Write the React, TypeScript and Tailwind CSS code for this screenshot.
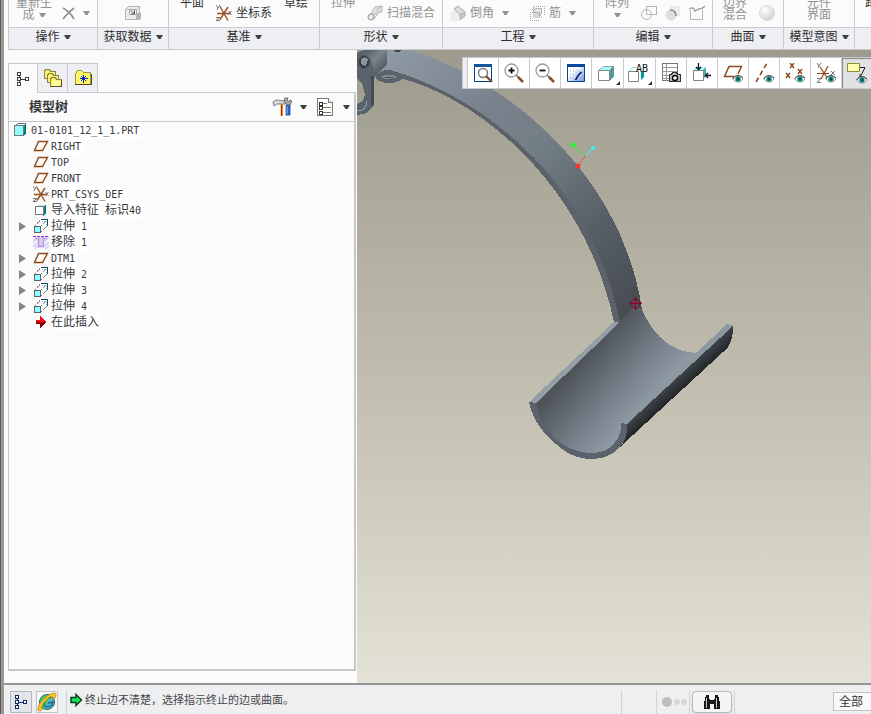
import React from 'react';
import clsx from 'clsx';

type IconProps = { children: React.ReactNode; size?: 16 | 20; smooth?: boolean };

const Icon: React.FC<IconProps> = ({ children, size = 16, smooth }) => (
  <svg
    viewBox={size === 20 ? '0 0 20 20' : '0 0 16 16'}
    className={clsx('shrink-0', size === 20 ? 'w-5 h-5' : 'w-4 h-4')}
    fill="none"
    shapeRendering={smooth ? 'auto' : 'crispEdges'}
    aria-hidden="true"
  >
    {children}
  </svg>
);

const Caret: React.FC<{ muted?: boolean }> = ({ muted }) => (
  <svg viewBox="0 0 7 4" className={clsx('shrink-0 w-[7px] h-1', muted ? 'text-[#929294]' : 'text-[#404044]')} aria-hidden="true">
    <path d="M0 0h7L4.5 4h-2z" fill="currentColor" />
  </svg>
);

/* ---------- ribbon icons ---------- */

const CrossIcon = () => (
  <Icon smooth>
    <path d="M2 3c4 2 8 6 11 11M13 3C9 6 5 10 2 14" stroke="#929292" strokeWidth="1.8" />
  </Icon>
);

const ImportIcon = () => (
  <svg viewBox="0 0 18 16" className="w-[18px] h-4" fill="none" aria-hidden="true">
    <path d="M1.500 4.500l3-3h11v10l-3 3h-11z" fill="#ececec" stroke="#b4b4b4" />
    <path d="M1.500 4.500h11v10M12.500 4.500l3-3" stroke="#c2c2c2" />
    <path d="M12 8h5v6l-2 1h-3z" fill="#b3b3b3" />
    <path d="M5.500 4.500h7v5h-7z" fill="#f8f8f8" stroke="#ababab" />
    <path d="M6.500 5.500l4 3M10.500 5v4H7" stroke="#555" />
  </svg>
);

const CsysIcon = () => (
  <Icon smooth>
    <path d="M1 8.500h13M4 1.500l8 14M12 2L4 14.500" stroke="#9a4f1c" strokeWidth="1.4" />
    <path d="M0 0l2 3 2-3M2 3l-1 2M0 12.500h4l-4 3h4M12.500 6l3 4M15.500 6l-3 4" stroke="#77777c" />
  </Icon>
);

const SweepIcon = () => (
  <Icon smooth>
    <path d="M1 11C5 9 5 6 8 2l7-1v6c-4 0-5 3-8 7z" fill="#e2e2e2" stroke="#b4b4b4" />
    <circle cx="4" cy="12" r="3" fill="#e9e9e9" stroke="#999" />
    <path d="M9 5l6-4M6 10l7-4" stroke="#b8b8b8" />
  </Icon>
);

const ChamferIcon = () => (
  <Icon smooth>
    <path d="M0 7l5-1 4 4v6H0z" fill="#eeeeee" />
    <path d="M10 9l5-2v4l-5 4z" fill="#c9c9c9" />
    <path d="M4 4l4-3 7 6-5 3z" fill="#dcdcdc" stroke="#a8a8a8" />
    <path d="M10 10v5l5-4V7" stroke="#b0b0b0" />
  </Icon>
);

const RibIcon = () => (
  <Icon>
    <path d="M1 7v8h9l5-5V1H6z" stroke="#a5a5a5" strokeDasharray="1 1" />
    <path d="M4 7h7v6H4z" fill="#d5d5d5" />
    <path d="M4 7l3-4h5v6l-2 3V7z" fill="#e7e7e7" stroke="#b2b2b2" />
  </Icon>
);

const MergeIcon = () => (
  <Icon smooth>
    <rect x="5.500" y="1.500" width="10" height="8" stroke="#b5b5b5" />
    <circle cx="5.500" cy="9.500" r="5" fill="#fbfbfb" stroke="#b5b5b5" />
    <path d="M5.500 5v4.500h5" stroke="#b5b5b5" />
  </Icon>
);

const IntersectIcon = () => (
  <Icon smooth>
    <rect x="5" y="1" width="10" height="10" fill="#ececec" />
    <circle cx="6" cy="10" r="5.500" fill="#dedede" />
    <path d="M5 5c4 0 6 2 6 6" stroke="#888" strokeWidth="1.500" />
  </Icon>
);

const TrimIcon = () => (
  <Icon smooth>
    <path d="M1.500 5v9.500h12V5" stroke="#b5b5b5" />
    <path d="M0 4c3-2 5-1 6 2l4-2c3 0 4-1 6-3" stroke="#999" strokeWidth="1.300" />
  </Icon>
);

const SphereIcon = () => (
  <Icon smooth>
    <defs>
      <radialGradient id="sphere" cx="35%" cy="30%" r="75%">
        <stop offset="0" stopColor="#ffffff" />
        <stop offset="1" stopColor="#d0d0d0" />
      </radialGradient>
    </defs>
    <circle cx="8" cy="8" r="7.500" fill="url(#sphere)" stroke="#dcdcdc" />
  </Icon>
);

/* ---------- tree icons ---------- */

const PartIcon = () => (
  <Icon>
    <path d="M10 4l3-3v10l-3 3z" fill="#008c92" />
    <path d="M1 4l3-3h9l-3 3z" fill="#e4ffff" />
    <path d="M1.500 4.500l3-3h8" stroke="#777" />
    <rect x="1.500" y="3.500" width="9" height="10" fill="#90ffff" stroke="#777" />
    <path d="M12.500 2v9l-2 2" stroke="#006b72" />
  </Icon>
);

const DatumPlaneIcon = () => (
  <Icon smooth>
    <path d="M1.500 12.500L5.500 3.500h9l-5 9z" stroke="#8f4818" strokeWidth="1.400" />
  </Icon>
);

const ImportFeatureIcon = () => (
  <Icon>
    <path d="M10 5l3-2v8l-3 3z" fill="#168c93" />
    <path d="M3 5l3-2h7l-3 2z" fill="#a8f6f8" />
    <path d="M12.500 3v8" stroke="#006f79" />
    <rect x="2.500" y="4.500" width="8" height="8" fill="#fff" stroke="#777" />
  </Icon>
);

const ExtrudeIcon = () => (
  <Icon>
    <path d="M2 8l6-7M8 14l7-7M8 8l5-5" stroke="#888" strokeDasharray="2 1" />
    <path d="M8 1.500h6.500v6" stroke="#164f53" />
    <path d="M9 3.500h4v4" stroke="#8cd8d8" strokeDasharray="1 1" />
    <rect x="1.500" y="8.500" width="6" height="6" fill="#91ffff" stroke="#606060" />
  </Icon>
);

const RemoveIcon = () => (
  <Icon smooth>
    <path d="M0 2h16v12H0z" fill="#f1f1ff" />
    <path d="M0 8l4-4M0 13l4-4M2 15l3-3M12 7l4-4M12 12l4-4M12 15l4-3" stroke="#ccd0f7" strokeWidth="1.500" />
    <path d="M5 3h6v9H5z" fill="#d3d3d3" />
    <path d="M2 4.500h3.500v8h5v-8H14" stroke="#ca90ee" strokeWidth="1.500" />
    <path d="M0 2.500h16" stroke="#8c2ec8" strokeDasharray="3 1" />
  </Icon>
);

const InsertHereIcon = () => (
  <Icon>
    <path d="M3 6h4V2l6 6-6 6v-4H3z" fill="#ef1010" />
    <path d="M3 8h10l-6 6v-4H3z" fill="#8e0000" />
  </Icon>
);

const ModelTreeIcon = ({ color = '#3d3d40' }) => (
  <Icon>
    <path d="M4 5v6M6 8.500h4" stroke={color} />
    <path d="M2.500 1.500h3v3h-3zM2.500 6.500h3v3h-3zM2.500 11.500h3v3h-3zM10.500 6.500h3v3h-3z" fill="#fff" stroke={color} />
  </Icon>
);

const FoldersIcon = () => (
  <Icon size={20}>
    {['M1.500 3.500l1-2h4l1 2h5v7h-11z', 'M4.500 7.500l1-2h4l1 2h5v7h-11z', 'M7.500 11.500l1-2h4l1 2h5v7h-11z'].map((d) => (
      <path key={d} d={d} fill="#fff06a" stroke="#8a8548" />
    ))}
    <path d="M9 13h8v5H9z" fill="#ffff9c" />
    <path d="M8 18.500h10.500V12" stroke="#555021" />
  </Icon>
);

const FavoritesIcon = () => (
  <Icon size={20}>
    <path d="M2.500 5.500l2-3h4l2 2h7v12h-15z" fill="#fff567" stroke="#9b9550" />
    <path d="M2 16.500h16.500V6" stroke="#4f4a19" />
    <path d="M10.500 7v8M7 10.500h8M8 8l5 5M13 8l-5 5" stroke="#002acc" />
  </Icon>
);

const ToolsIcon = () => (
  <Icon size={20} smooth>
    <path d="M8 7h3v12H8z" fill="#e6a21a" />
    <path d="M8 7h1v12H8z" fill="#fff28a" />
    <path d="M9.500 8v11" stroke="#b31c10" strokeWidth="1.200" />
    <path d="M1 5l3-2 9 1v3H5L2 9z" fill="#d8dcdc" stroke="#5c6464" strokeWidth=".8" />
    <path d="M14 8h4v10h-4z" fill="#2a64d0" stroke="#234a93" strokeWidth=".8" />
    <path d="M15 9v8" stroke="#8bb5f4" />
    <path d="M13 1l-1 3 3 4h3l2-4-2-1-2 2-1-2 1-2z" fill="#aaa" stroke="#555" strokeWidth=".8" />
  </Icon>
);

const SettingsListIcon = () => (
  <Icon size={20}>
    <path d="M2.500 1.500h11l4 4v13h-15z" fill="#fffef9" stroke="#777" />
    <path d="M13.500 1.500v4h4" fill="#ddd" stroke="#777" />
    <path d="M8 6.500h4M8 10.500h8M8 15.500h8" stroke="#777" />
    {[6, 10, 15].map((y) => (
      <path key={y} d={`M4 ${y - 1}h3v3H4z`} stroke="#333" />
    ))}
  </Icon>
);

/* ---------- graphics toolbar icons ---------- */

const Lens: React.FC<{ children?: React.ReactNode }> = ({ children }) => (
  <>
    <circle cx="7.500" cy="7.500" r="6.500" fill="#fff" stroke="#999" strokeWidth="1.300" />
    {children}
    <path d="M12 12l3 3" stroke="#777" strokeWidth="1.500" />
    <path d="M14 14l5 5" stroke="#854c32" strokeWidth="2.500" />
  </>
);

const Eye = () => (
  <g shapeRendering="auto">
    <path d="M10 16c2-4 8-4 10 0-2 4-8 4-10 0z" fill="#fff" stroke="#8b7566" strokeWidth=".8" />
    <circle cx="15" cy="16" r="2.700" fill="#00898c" />
    <circle cx="15" cy="16" r="1" fill="#123436" />
    <path d="M9.500 16c3-5 8-4 10.500-1" stroke="#574339" />
  </g>
);

const RefitIcon = () => (
  <Icon size={20} smooth>
    <path d="M1.500 1.500h17v17h-17z" fill="#fff" stroke="#00438c" />
    <path d="M1 1h18v3H1z" fill="#12539c" />
    <circle cx="10" cy="10" r="4.500" fill="#fff" stroke="#777" strokeWidth="1.400" />
    <path d="M13 13l6 6" stroke="#84482f" strokeWidth="2.300" />
  </Icon>
);

const ZoomInIcon = () => (
  <Icon size={20} smooth>
    <Lens>
      <path d="M4.500 7.500h6M7.500 4.500v6" stroke="#111" strokeWidth="1.800" />
    </Lens>
  </Icon>
);

const ZoomOutIcon = () => (
  <Icon size={20} smooth>
    <Lens>
      <path d="M4.500 7.500h6" stroke="#111" strokeWidth="1.800" />
    </Lens>
  </Icon>
);

const RepaintIcon = () => (
  <Icon size={20} smooth>
    <defs>
      <linearGradient id="repaint" x1="0" y1="0" x2="1" y2="1">
        <stop offset=".35" stopColor="#fff" />
        <stop offset="1" stopColor="#6d91d0" />
      </linearGradient>
    </defs>
    <path d="M1.500 1.500h17v17h-17z" fill="url(#repaint)" stroke="#0a419b" />
    <path d="M1 1h18v3H1z" fill="#0c479f" />
    <path d="M4 7.500l10 3M4 11l8 2M4 14.500l6 1M7 5.500l8 4" stroke="#8db4dc" strokeDasharray="1 2" />
    <path d="M15.500 9l-3 3-3 5" stroke="#06118b" strokeWidth="1.500" />
  </Icon>
);

const ShadingIcon = () => (
  <Icon size={20} smooth>
    <path d="M2.500 7.500l5-4h10l-4 4z" fill="#9bffff" stroke="#8fa9aa" />
    <path d="M13.500 7.500l4-4v10l-4 4z" fill="#4aa9ad" stroke="#858585" />
    <path d="M15.500 6v10" stroke="#117f86" strokeDasharray="1 1" />
    <path d="M2.500 7.500h11v10h-11z" fill="#fff" stroke="#858585" />
  </Icon>
);

const SavedViewsIcon = () => (
  <svg viewBox="0 0 22 20" className="w-[22px] h-5" fill="none" aria-hidden="true">
    <path d="M1.500 8.500h10v10h-10z" fill="#fff" stroke="#858585" />
    <path d="M1.500 8.500l4-4h4" stroke="#70dfe2" />
    <path d="M14 8h3v6l-3 3z" fill="#00969a" />
    <text x="9" y="9" className="font-['DejaVu_Sans_Mono',monospace] text-[10px]" fill="#111">AB</text>
  </svg>
);

const ViewManagerIcon = () => (
  <Icon size={20}>
    <path d="M1.500.500h15v17h-15z" fill="#fff" stroke="#777" />
    <path d="M5.500 1v17M1 4.500h15M1 8.500h15M1 12.500h10M1 15.500h10" stroke="#999" />
    <path d="M8.500 11.500h2l1-2h4l1 2h3v7h-11z" fill="#c2bbb3" stroke="#35322e" />
    <circle cx="14" cy="15" r="2.500" fill="#fff" stroke="#111" strokeWidth="1.500" shapeRendering="auto" />
  </Icon>
);

const ViewNormalIcon = () => (
  <Icon size={20} smooth>
    <path d="M1 7l3-3h10l-3 3z" fill="#96ffff" />
    <path d="M11 7l3-3v9l-3 4z" fill="#4fa9ad" />
    <path d="M1.500 7.500h10v10h-10z" fill="#fff" stroke="#858585" />
    <path d="M6.500 0v6M4 4l2.500 2.500L9 4M19 12.500h-6M16 10l-2.500 2.500L16 15" stroke="#111" strokeWidth="1.300" />
  </Icon>
);

const PlaneDisplayIcon = () => (
  <Icon size={20} smooth>
    <path d="M11 13.500H1.500L6 3.500h12.500L15 11" stroke="#8f4818" strokeWidth="1.500" />
    <Eye />
  </Icon>
);

const AxisDisplayIcon = () => (
  <Icon size={20} smooth>
    <path d="M2 19L13 0" stroke="#8f4818" strokeWidth="1.500" strokeDasharray="5 3" />
    <Eye />
  </Icon>
);

const PointDisplayIcon = () => (
  <Icon size={20} smooth>
    <path d="M5 0l4 5M9 0L5 5M1 10l4 5M5 10l-4 5M13 6l4 5M17 6l-4 5" stroke="#8f4818" strokeWidth="1.400" />
    <Eye />
  </Icon>
);

const CsysDisplayIcon = () => (
  <Icon size={20} smooth>
    <path d="M1 10.500h12M4 4l8 12M12 3L5 16" stroke="#8f4818" strokeWidth="1.200" />
    <path d="M1 0l2 3 2-3M3 3l-1 2M1 15.500h4l-4 4h4M15 8l4 4M19 8l-4 4" stroke="#77777c" />
    <Eye />
  </Icon>
);

const AnnotationDisplayIcon = () => (
  <svg viewBox="0 0 22 22" className="w-[22px] h-[22px]" fill="none" aria-hidden="true">
    <path d="M1.500 1.500h12v8h-12z" fill="#ffffb0" stroke="#8e8d31" />
    <path d="M14 5.500h5l-5 10M14 12v3.500h4" stroke="#222" />
    <g transform="translate(1 2)"><Eye /></g>
  </svg>
);

/* ---------- status bar icons ---------- */

const BrowserIcon = () => (
  <Icon size={20} smooth>
    <circle cx="10" cy="10" r="7.500" fill="#4fb9c4" stroke="#226a67" />
    <path d="M4 7c3-5 9-5 11-2l-5 4-2 7-4-3z" fill="#62c944" />
    <path d="M14 6C11 4 8 7 7 12c0 3 4 4 8 1l1-3-5 1" stroke="#1a6a9a" strokeWidth="1.500" />
    <path d="M1 18C-1 13 12 0 18 1c2 1 1 5-2 7 1-6-5-4-11 6-1 2-1 3 1 3-2 2-4 3-5 1z" fill="#f6c91c" stroke="#9a6b1b" strokeWidth=".6" />
  </Icon>
);

const PromptIcon = () => (
  <Icon smooth>
    <path d="M2 5.500h5V2.500L12.500 8 7 13.500v-3H2z" fill="#13e95e" stroke="#063b19" strokeWidth="1.400" />
  </Icon>
);

const BinocularsIcon = () => (
  <Icon size={20}>
    <path d="M4 3h3v4h1v10H2v-6zM13 3h3l2 8v6h-6V7h1zM8 8h4v4H8z" fill="#171717" />
    <path d="M4.500 6v10M14.500 6v10" stroke="#c8c8c8" />
  </Icon>
);

/* ---------- ribbon ---------- */

interface CommandProps {
  label: string;
  icon?: React.ReactNode;
  enabled?: boolean;
  menu?: boolean;
  high?: boolean;
}

const Command: React.FC<CommandProps> = ({ label, icon, enabled, menu, high }) => (
  <button
    type="button"
    disabled={!enabled}
    className={clsx(
      'shrink-0 flex items-center gap-1 whitespace-nowrap leading-[12px]',
      high ? 'mb-[18px] h-3' : 'mb-[6px] h-4',
      enabled ? 'text-[#333336]' : 'text-[#929294]',
    )}
  >
    {icon}
    <span>{label}</span>
    {menu && <span className="pl-1"><Caret muted={!enabled} /></span>}
  </button>
);

const IconCommand: React.FC<{ label: string; icon: React.ReactNode }> = ({ label, icon }) => (
  <button type="button" disabled aria-label={label} className="shrink-0 mb-[6px] h-4">
    {icon}
  </button>
);

interface GroupProps {
  title?: string;
  width: string;
  body: string;
  children: React.ReactNode;
}

const RibbonGroup: React.FC<GroupProps> = ({ title, width, body, children }) => (
  <section className={clsx('flex flex-col border-r border-[#c9cbcf]', width)}>
    <div className={clsx('flex items-end h-[27px] overflow-hidden', body)}>{children}</div>
    <div className="flex h-[22px] items-center justify-center border-t border-[#c9cbcf] bg-[#eeeff2] pb-1">
      {title && (
        <button type="button" className="flex items-center gap-1 whitespace-nowrap leading-4 text-[#2d2d30]">
          {title}
          <Caret />
        </button>
      )}
    </div>
  </section>
);

const Ribbon = () => (
  <header className="shrink-0 flex h-[50px] overflow-hidden bg-[#fbfbfb] pl-1">
    <div className="flex flex-1 min-w-0 overflow-hidden border-l border-b border-[#c9cbcf]">
      <RibbonGroup title="操作" width="shrink-0 w-[89px]" body="pl-[7px] gap-[9px]">
        <button type="button" disabled className="shrink-0 mb-[6px] flex flex-col items-center leading-[12px] text-[#929294]">
          <span className="whitespace-nowrap">重新生</span>
          <span className="flex items-center gap-1">成<Caret muted /></span>
        </button>
        <button type="button" disabled aria-label="删除" className="shrink-0 mb-[6px] flex h-4 items-center gap-[6px]">
          <CrossIcon />
          <Caret muted />
        </button>
      </RibbonGroup>
      <RibbonGroup title="获取数据" width="shrink-0 w-[71px]" body="justify-center">
        <IconCommand label="导入" icon={<ImportIcon />} />
      </RibbonGroup>
      <RibbonGroup title="基准" width="shrink-0 w-[151px]" body="pl-[11px] gap-3">
        <Command label="平面" enabled high />
        <Command label="坐标系" icon={<CsysIcon />} enabled />
        <Command label="草绘" enabled high />
      </RibbonGroup>
      <RibbonGroup title="形状" width="shrink-0 w-[123px]" body="pl-[11px] gap-3">
        <Command label="拉伸" high />
        <Command label="扫描混合" icon={<SweepIcon />} />
      </RibbonGroup>
      <RibbonGroup title="工程" width="shrink-0 w-[151px]" body="pl-[7px] gap-5">
        <Command label="倒角" icon={<ChamferIcon />} menu />
        <Command label="筋" icon={<RibIcon />} menu />
      </RibbonGroup>
      <RibbonGroup title="编辑" width="shrink-0 w-[119px]" body="pl-[11px] gap-2">
        <button type="button" disabled className="shrink-0 mb-[10px] mr-1 flex flex-col items-center gap-1 leading-[12px] text-[#929294]">
          <span className="whitespace-nowrap">阵列</span>
          <Caret muted />
        </button>
        <IconCommand label="合并" icon={<MergeIcon />} />
        <IconCommand label="相交" icon={<IntersectIcon />} />
        <IconCommand label="修剪" icon={<TrimIcon />} />
      </RibbonGroup>
      <RibbonGroup title="曲面" width="shrink-0 w-[71px]" body="pl-[10px] gap-3">
        <button type="button" disabled className="shrink-0 mb-[6px] w-6 leading-[12px] text-[#929294]">边界混合</button>
        <IconCommand label="自由式" icon={<SphereIcon />} />
      </RibbonGroup>
      <RibbonGroup title="模型意图" width="shrink-0 w-[71px]" body="justify-center">
        <button type="button" disabled className="shrink-0 mb-[6px] w-6 leading-[12px] text-[#929294]">元件界面</button>
      </RibbonGroup>
      <RibbonGroup width="flex-1" body="pl-[10px]">
        <Command label="距" enabled high />
      </RibbonGroup>
    </div>
  </header>
);

/* ---------- model tree ---------- */

interface TreeNode {
  name: string;
  icon: React.FC;
  expandable?: boolean;
}

const nodes: TreeNode[] = [
  { name: 'RIGHT', icon: DatumPlaneIcon },
  { name: 'TOP', icon: DatumPlaneIcon },
  { name: 'FRONT', icon: DatumPlaneIcon },
  { name: 'PRT_CSYS_DEF', icon: CsysIcon },
  { name: '导入特征 标识40', icon: ImportFeatureIcon },
  { name: '拉伸 1', icon: ExtrudeIcon, expandable: true },
  { name: '移除 1', icon: RemoveIcon },
  { name: 'DTM1', icon: DatumPlaneIcon, expandable: true },
  { name: '拉伸 2', icon: ExtrudeIcon, expandable: true },
  { name: '拉伸 3', icon: ExtrudeIcon, expandable: true },
  { name: '拉伸 4', icon: ExtrudeIcon, expandable: true },
  { name: '在此插入', icon: InsertHereIcon },
];

// Latin runs are set in a half-width face, two characters per ideograph
const NodeName: React.FC<{ name: string }> = ({ name }) => (
  <span className="whitespace-pre bg-white pr-[2px] text-[12px] leading-4 text-[#39393c]">
    {name.split(/([\x20-\x7e]+)/).filter(Boolean).map((part, i) => (
      <span key={i} className={/^[\x20-\x7e]/.test(part) ? "font-['DejaVu_Sans_Mono',monospace] text-[10px]" : ''}>
        {part}
      </span>
    ))}
  </span>
);

const ModelTree = () => (
  <aside className="shrink-0 w-[353px] flex flex-col bg-[#fbfbfb] pl-1 pr-[1px] pt-[13px] pb-3">
    <div role="tablist" className="flex h-[30px] items-stretch">
      <button role="tab" aria-selected="true" aria-label="模型树" className="flex w-[30px] items-center justify-center border-l border-t border-r border-[#c5c8cc]">
        <ModelTreeIcon />
      </button>
      <button role="tab" aria-selected="false" aria-label="文件夹浏览器" className="flex w-[30px] items-center justify-center border-t border-r border-b border-[#c5c8cc] bg-[#eeeff2]">
        <FoldersIcon />
      </button>
      <button role="tab" aria-selected="false" aria-label="收藏夹" className="flex w-[30px] items-center justify-center border-t border-r border-b border-[#c5c8cc] bg-[#eeeff2]">
        <FavoritesIcon />
      </button>
      <div className="flex-1 border-b border-[#c5c8cc]" />
    </div>
    <div className="flex flex-1 flex-col border-l border-r-2 border-b-2 border-[#c5c8cc]">
      <div className="flex h-[29px] items-center border-b border-[#c5c8cc] pl-5 pr-1">
        <h2 className="flex-1 text-[13px] font-bold leading-4 text-[#39393c]">模型树</h2>
        <button type="button" aria-label="设置" className="mr-2 flex items-center gap-2">
          <ToolsIcon />
          <Caret />
        </button>
        <button type="button" aria-label="显示" className="flex items-center gap-2">
          <SettingsListIcon />
          <Caret />
        </button>
      </div>
      <ul role="tree" aria-label="模型树" className="pl-1">
        <li role="treeitem" aria-expanded="true">
          <div className="flex h-4 items-center gap-[2px]">
            <PartIcon />
            <NodeName name="01-0101_12_1_1.PRT" />
          </div>
          <ul role="group">
            {nodes.map(({ name, icon: NodeIcon, expandable }) => (
              <li key={name} role="treeitem" className="flex h-4 items-center pl-[6px]">
                <span className="w-[14px]">
                  {expandable && (
                    <button type="button" aria-label={`展开 ${name}`} className="block">
                      <svg viewBox="0 0 7 9" className="w-[7px] h-[9px]" aria-hidden="true">
                        <path d="M0 0l7 4.500L0 9z" fill="#858588" />
                      </svg>
                    </button>
                  )}
                </span>
                <NodeIcon />
                <span className="flex pl-[2px]"><NodeName name={name} /></span>
              </li>
            ))}
          </ul>
        </li>
      </ul>
    </div>
  </aside>
);

/* ---------- graphics area ---------- */

const viewTools = [
  { label: '重新调整', icon: RefitIcon },
  { label: '放大', icon: ZoomInIcon },
  { label: '缩小', icon: ZoomOutIcon },
  { label: '重画', icon: RepaintIcon },
  { label: '显示样式', icon: ShadingIcon, more: true },
  { label: '已命名视图', icon: SavedViewsIcon, more: true },
  { label: '视图管理器', icon: ViewManagerIcon },
  { label: '视图法向', icon: ViewNormalIcon },
  { label: '平面显示', icon: PlaneDisplayIcon },
  { label: '轴显示', icon: AxisDisplayIcon },
  { label: '点显示', icon: PointDisplayIcon },
  { label: '坐标系显示', icon: CsysDisplayIcon },
  { label: '注释显示', icon: AnnotationDisplayIcon, active: true },
];

const ViewToolbar = () => (
  <div role="toolbar" aria-label="视图" className="absolute left-[105px] right-0 top-[7px] flex h-8 overflow-hidden border-l border-y border-[#c8cacd] bg-[#eeeff2] pl-1">
    {viewTools.map(({ label, icon: ToolIcon, more, active }) => (
      <button
        key={label}
        type="button"
        aria-label={label}
        aria-pressed={active}
        className={clsx(
          'relative shrink-0 flex items-center justify-center border-l border-[#c8cacd]',
          more ? 'w-8 pr-1' : 'w-[31px] pr-[1px]',
          active ? 'bg-[#e1e2e5] shadow-[inset_1px_1px_1px_#888]' : 'bg-white',
        )}
      >
        <ToolIcon />
        {more && (
          <svg viewBox="0 0 4 4" className="absolute right-[3px] bottom-[3px] w-1 h-1" aria-hidden="true">
            <path d="M4 0v4H0z" fill="#333" />
          </svg>
        )}
      </button>
    ))}
  </div>
);

const Model = () => (
  <svg viewBox="357 50 514 633" className="absolute left-0 top-0 w-[514px] h-[633px]" fill="none" shapeRendering="crispEdges" role="img" aria-label="模型">
    <defs>
      <linearGradient id="band" gradientUnits="userSpaceOnUse" x1="390" y1="55" x2="632" y2="315">
        <stop offset="0" stopColor="#8d99a2" />
        <stop offset=".3" stopColor="#7a818d" />
        <stop offset=".48" stopColor="#727e85" />
        <stop offset=".75" stopColor="#575e67" />
        <stop offset="1" stopColor="#464c50" />
      </linearGradient>
      <linearGradient id="trough" gradientUnits="userSpaceOnUse" x1="582" y1="358" x2="652" y2="420">
        <stop offset="0" stopColor="#4d5357" />
        <stop offset=".25" stopColor="#616872" />
        <stop offset=".6" stopColor="#7e8791" />
        <stop offset="1" stopColor="#98a4ad" />
      </linearGradient>
      <linearGradient id="shell" gradientUnits="userSpaceOnUse" x1="672" y1="380" x2="685" y2="394">
        <stop offset="0" stopColor="#41484c" />
        <stop offset="1" stopColor="#17191c" />
      </linearGradient>
      <linearGradient id="boss" gradientUnits="userSpaceOnUse" x1="366" y1="52" x2="388" y2="72">
        <stop offset="0" stopColor="#59616b" />
        <stop offset=".4" stopColor="#7b838d" />
        <stop offset="1" stopColor="#3f454a" />
      </linearGradient>
    </defs>

    {/* arm */}
    <path d="M380 50H410C500 76 622 170 642 310L620 322C592 180 480 95 390 70L375 78z" fill="url(#band)" />
    <path d="M377 75Q382 69 390 70C480 95 592 180 620 322H614C585 184 478 98 400 78L380 80z" fill="#5b626a" />

    {/* clevis and boss */}
    <path d="M394 50h7l-2 2h-4z" fill="#40464c" />
    <ellipse cx="389" cy="77" rx="13" ry="6" fill="#5b626a" />
    <ellipse cx="389" cy="77" rx="7" ry="2" fill="#828d96" />
    <path d="M385 77h9M389 79h4" stroke="#4a5057" />
    <path d="M357 53l7-3h23v14l-11 11-2 4v26l-7 8-10 2v-11l6-3 2-6-3-12-5-4z" fill="#5a626c" />
    <path d="M363 54l7-4h17v14l-12 10-3-11z" fill="url(#boss)" />
    <path d="M374 76v27l-3 4V76z" fill="#444b52" />
    <path d="M357 111c7 0 10-5 10-10" stroke="#929da6" />
    <ellipse cx="364" cy="62" rx="7" ry="7" fill="#555d66" />
    <ellipse cx="364" cy="62" rx="5" ry="6" fill="#343a40" />
    <path d="M361 60c1-4 6-3 7 0l-2 6c-3 0-6-2-5-6z" fill="#89949c" />

    {/* cradle, the rim is laid over the trough's near edge */}
    <path d="M618 322L637 304L642 310Q646 319 653 329Q659 337 667 343Q679 352 697 353L624 423Q624 436 616 446Q607 456 592 456Q575 455 559 445Q540 430 533 402z" fill="url(#trough)" />
    <path d="M614 322h6L536 403l-7-1z" fill="#929fa7" />
    <path d="M529 402l7 1Q541 429 561 443Q575 453 592 453Q608 453 615 442Q622 434 621 423l6 1v13l-7 10Q609 459 592 459Q572 459 556 444Q534 426 529 402z" fill="#5b626b" />
    <path d="M627 424L733 326Q733 345 723 352L620 447Q628 439 627 424z" fill="url(#shell)" />
    <path d="M727 324l6 2-106 98-6-1z" fill="#8d99a1" />

    {/* spin centre */}
    <g shapeRendering="auto">
      <path d="M573 145l12 11" stroke="#35ed38" />
      <path d="M585 156l8-8" stroke="#34f3f4" />
      <path d="M585 156l-7 10" stroke="#f33434" strokeDasharray="2 1" />
      <circle cx="573" cy="145" r="2.500" fill="#28f52c" />
      <circle cx="593" cy="148" r="2" fill="#34f3f4" />
      <circle cx="578" cy="166" r="2.500" fill="#fa3434" />
      <circle cx="635.500" cy="303.500" r="4.500" stroke="#8c0026" />
      <path d="M629 303.500h13M635.500 297v13" stroke="#8c0026" />
    </g>
  </svg>
);

const StatusBar = () => (
  <footer className="shrink-0 flex h-[31px] items-center border-t-2 border-[#979595] bg-[#eeeff1] pl-[6px] pt-1">
    <button type="button" aria-label="显示导航器" className="flex w-[22px] h-[22px] items-center justify-center border border-[#b5b7ba] bg-[#e4e5e8]">
      <ModelTreeIcon color="#102961" />
    </button>
    <button type="button" aria-label="显示浏览器" className="ml-1 flex w-[22px] h-[22px] items-center justify-center border border-[#c2c4c7] bg-[#f7f7f8]">
      <BrowserIcon />
    </button>
    <div className="ml-2 mr-[2px] w-px h-6 bg-[#d2d3d6]" />
    <div className="flex flex-1 items-center pb-1">
      <PromptIcon />
      <p role="status" className="whitespace-nowrap text-[11px] leading-4 text-[#47474a]">终止边不清楚，选择指示终止的边或曲面。</p>
    </div>
    <div className="w-9 h-6 border-l border-r border-[#d2d3d6]" />
    <svg viewBox="0 0 32 12" className="w-8 h-3" aria-hidden="true">
      <circle cx="10" cy="6" r="5" fill="#bdbdbd" />
      <circle cx="20" cy="6" r="3" fill="#d7d7d7" />
      <circle cx="27" cy="6" r="3" fill="#d7d7d7" />
    </svg>
    <div className="w-[46px] h-6 flex items-center justify-center border-l border-r border-[#d2d3d6]">
      <button type="button" aria-label="查找" className="flex w-10 h-[22px] items-center justify-center rounded-sm border border-[#b9babd] bg-[#f5f5f6] shadow-sm">
        <BinocularsIcon />
      </button>
    </div>
    <select aria-label="选择过滤器" className="ml-[98px] w-[38px] h-[19px] appearance-none border-l border-y border-[#c1c3c6] bg-[#f9f9fa] pl-[5px] text-[12px] leading-4 text-[#333]">
      <option>全部</option>
    </select>
  </footer>
);

export default function App() {
  return (
    <div className="border-l border-[#5f5b59]">
      <div className="flex min-h-screen flex-col overflow-hidden border-l-3 border-[#9a9896] bg-[#fbfbfb] font-['Liberation_Sans','Noto_Sans_CJK_SC',sans-serif] text-[12px]">
        <Ribbon />
        <div className="flex flex-1">
          <ModelTree />
          <main className="relative flex-1 overflow-hidden bg-linear-to-b from-[#9d9b8d] via-[#bfbcae] to-[#e4e2d6]">
            <Model />
            <ViewToolbar />
          </main>
        </div>
        <StatusBar />
      </div>
    </div>
  );
}
